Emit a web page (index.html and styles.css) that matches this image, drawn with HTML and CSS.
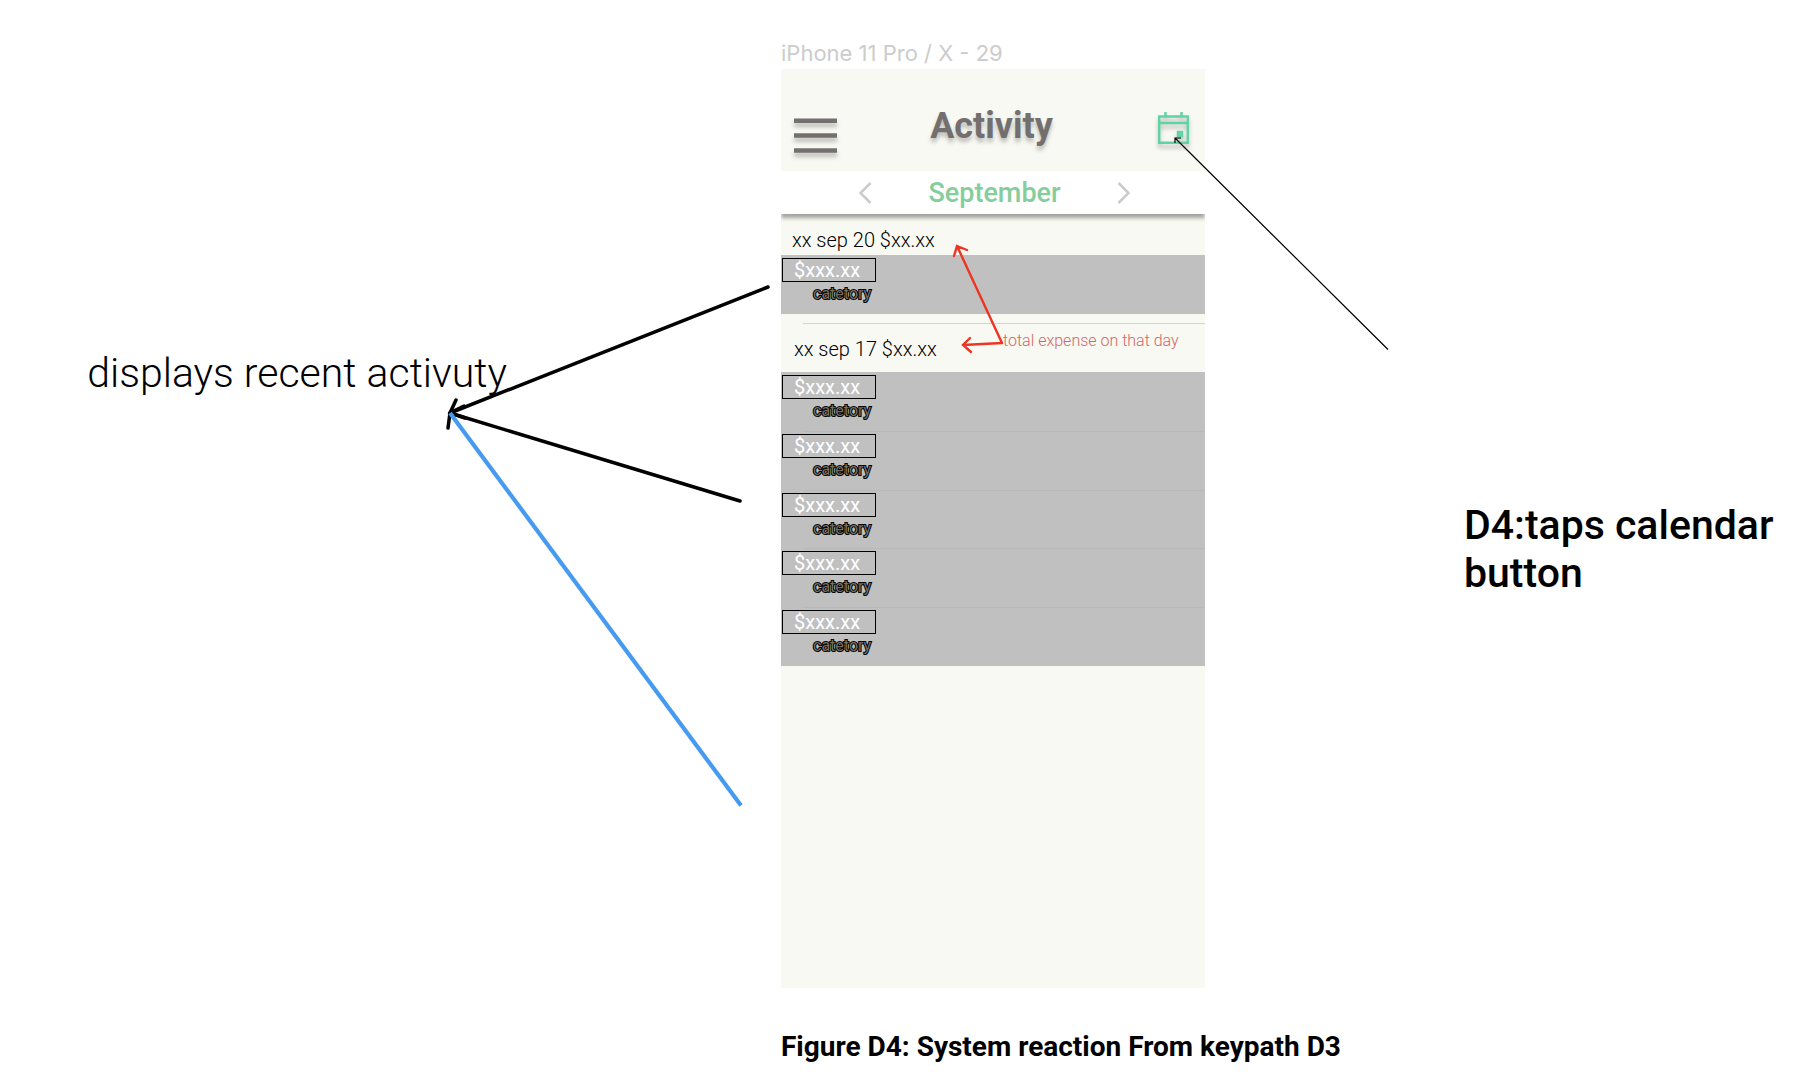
FILE: index.html
```html
<!DOCTYPE html>
<html lang="en">
<head>
<meta charset="utf-8">
<title>Figure D4: Activity</title>
<link rel="stylesheet" href="styles.css">
</head>
<body>
<main class="board">
  <p class="note note-left">displays recent activuty</p>

  <figure class="frame">
    <p class="frame-name">iPhone 11 Pro / X - 29</p>
    <div class="phone">
      <header class="topbar">
        <button class="icon-button shadowed" type="button" aria-label="Menu">
          <svg width="43" height="35" viewBox="0 0 43 35" fill="#736f6e"><path d="M0 .5h43v4.500H0zM0 15.300h43v4.500H0zM0 30.200h43v4.500H0z"/></svg>
        </button>
        <h1 class="title">Activity</h1>
        <button class="icon-button calendar shadowed" type="button" aria-label="Calendar">
          <svg width="31" height="32" viewBox="0 0 31 32" fill="none" stroke="#5fd3a2" stroke-width="2.400"><path d="M1.200 4.500h28.600v26.300H1.200zM1.200 11h28.600M7.500 0v5M23.500 0v5"/><path d="M20 20h4v4h-4z" fill="#7edbb5"/></svg>
        </button>
      </header>
      <nav class="month" aria-label="Month">
        <button class="icon-button" type="button" aria-label="Previous month">
          <svg width="13" height="22" viewBox="0 0 13 22" fill="none" stroke="#cccacb" stroke-width="2.500"><path d="M11.500 1 1.500 11l10 10"/></svg>
        </button>
        <h2 class="month-name">September</h2>
        <button class="icon-button" type="button" aria-label="Next month">
          <svg width="13" height="22" viewBox="0 0 13 22" fill="none" stroke="#cccacb" stroke-width="2.500"><path d="m1.500 1 10 10-10 10"/></svg>
        </button>
      </nav>
      <section>
        <h3 class="day">xx sep 20 $xx.xx</h3>
        <ul class="entries">
          <li class="entry"><span class="amount">$xxx.xx</span><span class="category">catetory</span></li>
        </ul>
      </section>
      <section>
        <h3 class="day day-ruled">xx sep 17 $xx.xx</h3>
        <ul class="entries">
          <li class="entry"><span class="amount">$xxx.xx</span><span class="category">catetory</span></li>
          <li class="entry"><span class="amount">$xxx.xx</span><span class="category">catetory</span></li>
          <li class="entry"><span class="amount">$xxx.xx</span><span class="category">catetory</span></li>
          <li class="entry"><span class="amount">$xxx.xx</span><span class="category">catetory</span></li>
          <li class="entry"><span class="amount">$xxx.xx</span><span class="category">catetory</span></li>
        </ul>
      </section>
      <p class="remark">total expense on that day</p>
      <svg class="arrows" width="424" height="919" viewBox="781 69 424 919" fill="none" aria-hidden="true">
        <g stroke="#000" stroke-width="3.500" stroke-linecap="round">
          <path d="M768 287 450 413M456 400l-6 13 15 5"/>
          <path d="M740 501 450 413M448 428l2-15 14-7"/>
        </g>
        <path d="M741 805.500 450 413" stroke="#469bf0" stroke-width="4.200"/>
        <g stroke="#ee3524" stroke-width="2.400" stroke-linecap="round">
          <path d="M1002 343 957 246M954 256l3-10 10 4"/>
          <path d="M1002 343 963 345M970 338l-7 7 8 7"/>
        </g>
        <path d="M1388 349.500 1175 138M1175 143v-5h6" stroke="#000" stroke-width="1.200"/>
      </svg>
    </div>
    <figcaption class="caption">Figure D4: System reaction From keypath D3</figcaption>
  </figure>

  <p class="note note-right">D4:taps calendar button</p>
</main>
</body>
</html>
```
FILE: styles.css
```css
* {
  box-sizing: border-box;
  margin: 0;
  padding: 0;
}

body {
  background: #fff;
  color: #000;
  font-family: Roboto, "Liberation Sans", sans-serif;
  overflow-x: hidden;
}

.board {
  display: grid;
  grid-template-columns: minmax(0, 781fr) 424px minmax(0, 615fr);
  align-items: start;
  padding-top: 40px;
}

.note {
  font-size: 41px;
  line-height: 48px;
}

.note-left {
  justify-self: end;
  margin: 309px 274px 0 0;
  font-weight: 300;
  white-space: nowrap;
}

.note-right {
  margin: 461px 24px 0 259px;
  font-weight: 500;
}

.frame-name {
  height: 29px;
  color: #ccc;
  font: 400 22px/26px Inter, sans-serif;
}

.phone {
  position: relative;
  min-height: 919px;
  background: #f8f9f3;
}

.icon-button {
  display: flex;
  border: 0;
  background: none;
}

.shadowed {
  filter: drop-shadow(0 4px 2px rgba(0, 0, 0, 0.25));
}

.topbar {
  display: grid;
  grid-template-columns: 1fr auto 1fr;
  align-items: start;
  height: 102px;
  padding: 36px 16px 0 13px;
}

.topbar .icon-button:first-child {
  margin-top: 13px;
}

.calendar {
  justify-self: end;
  margin-top: 7px;
}

.title {
  color: #736f6e;
  font-size: 36px;
  font-weight: 700;
  line-height: 42px;
  text-shadow: 0 4px 4px rgba(0, 0, 0, 0.25);
}

.month {
  display: flex;
  align-items: center;
  justify-content: center;
  gap: 56px;
  height: 43px;
  padding-left: 3px;
  background: #fff;
  box-shadow: 0 4px 4px rgba(0, 0, 0, 0.35);
  clip-path: inset(0 0 -10px 0);
}

.month-name {
  color: #86cd9c;
  font-size: 27px;
  font-weight: 500;
  line-height: 32px;
}

.day {
  height: 41px;
  padding: 14px 11px 0;
  font-size: 20px;
  font-weight: 300;
  line-height: 24px;
}

.day-ruled {
  position: relative;
  height: 58px;
  padding-top: 23px;
  padding-left: 13px;
}

.day-ruled::before {
  content: "";
  position: absolute;
  top: 9px;
  left: 22px;
  right: 0;
  height: 1px;
  background: #d3d4cf;
}

.entries {
  list-style: none;
  background: #c0c0c0;
}

.entry {
  display: flex;
  flex-direction: column;
  align-items: flex-start;
  gap: 1px;
  height: 59px;
  padding: 3px 0 0 1px;
}

.entry + .entry {
  background: linear-gradient(#b8b8b8, #b8b8b8) 22px 0 / 100% 1px no-repeat;
}

.entry:nth-child(3) {
  height: 58px;
}

.amount {
  width: 94px;
  height: 24px;
  padding-left: 11px;
  border: 1px solid #000;
  color: #fff;
  font-size: 20px;
  line-height: 22px;
}

.category {
  margin-left: 31px;
  color: #736f6e;
  font-size: 16px;
  line-height: 22px;
  -webkit-text-stroke: 2px #000;
  paint-order: stroke fill;
}

.remark {
  position: absolute;
  top: 262px;
  left: 222px;
  color: #cf6765;
  font-size: 16px;
  font-weight: 300;
  line-height: 20px;
  white-space: nowrap;
}

.arrows {
  position: absolute;
  top: 0;
  left: 0;
  overflow: visible;
  pointer-events: none;
}

.caption {
  margin-top: 43px;
  font-size: 28px;
  font-weight: 700;
  line-height: 32px;
  white-space: nowrap;
}
```
